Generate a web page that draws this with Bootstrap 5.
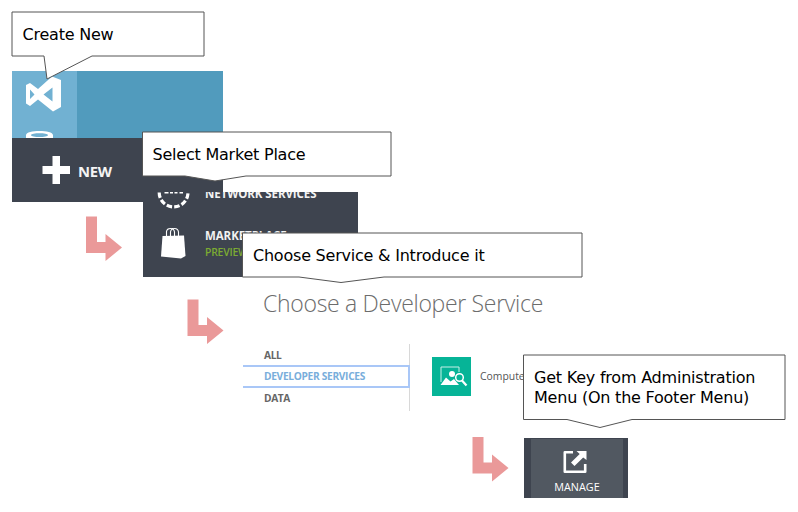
<!DOCTYPE html>
<html lang="en">
<head>
<meta charset="utf-8">
<meta name="viewport" content="width=device-width, initial-scale=1">
<title>Getting a service key</title>
<link href="https://cdn.jsdelivr.net/npm/bootstrap@5.3.0/dist/css/bootstrap.min.css" rel="stylesheet">
<style>
  body { background: #fff; color: #000; }
  .canvas { width: 798px; height: 512px; }
  .node { position: absolute; }
  .ui { font-family: "Open Sans", "Noto Sans", sans-serif; white-space: nowrap; line-height: 1; }
  .dark { background: #3e444f; color: #fff; }

  .shot-new { left: 12px; top: 71px; width: 211px; height: 130px; }
  .shot-new .upper { height: 67px; background: #519bbd; }
  .shot-new .side { width: 64.5px; background: #71b1d2; }
  .shot-new .bar { height: 63.5px; padding-left: 30px; gap: 8px; }
  .new-label { font-size: 14.8px; font-weight: 700; letter-spacing: -.3px; padding-top: 4px; color: #f4f4f4; }

  .shot-market { left: 143px; top: 192px; width: 215px; height: 85px; }
  .market-row { padding-left: 14px; gap: 14px; }
  .market-row.first { height: 18px; }
  .market-row.second { margin-top: 17px; padding-left: 17px; }
  .market-title { font-size: 11.5px; font-weight: 700; letter-spacing: -.08px; color: #f2f2f2; }
  .market-name { margin-top: 3px; }
  .net-title { margin-top: -4px; }
  .preview { font-size: 10.4px; font-weight: 600; color: #7cab32; letter-spacing: -.2px; margin-top: 5px; }

  .shot-choose { left: 243px; top: 290px; width: 310px; height: 121px; }
  .choose-title { font-size: 23px; font-weight: 300; color: #6c6c6c; line-height: 26px; padding-left: 20px; letter-spacing: -.3px; }
  .menu-list { width: 167px; height: 67px; margin-top: 28px; border-right: 1px solid #d8d8d8; font-size: 10.2px; font-weight: 700; color: #666; }
  .menu-line { padding-left: 21px; height: 21px; line-height: 22px; letter-spacing: -.4px; }
  .menu-line.chosen { height: 23px; line-height: 19px; margin-right: -1px; color: #79aedb; border: 2px solid #a9c7f7; border-left: 0; letter-spacing: -.32px; }
  .menu-line.last { line-height: 20px; }
  .tile { width: 39px; height: 38.5px; margin: 41px 0 0 22px; background: #06b497; }
  .tile-label { font-size: 10.4px; font-weight: 500; color: #555; margin: 55px 0 0 9px; }

  .shot-manage { left: 524px; top: 438px; width: 104px; height: 60px; padding: 1px 5px 0 7px; }
  .manage-btn { background: #515861; height: 59px; }
  .manage-label { font-size: 10.8px; font-weight: 500; margin-top: 6.500px; letter-spacing: 0; }

  .callout-text { font-family: "DejaVu Sans", Verdana, sans-serif; font-size: 16px; line-height: 20px; white-space: nowrap; letter-spacing: -.22px; }
  .overlay { left: 0; top: 0; }
  .t1 { left: 22.5px; top: 25px; }
  .t2 { left: 152.5px; top: 145px; }
  .t3 { left: 253px; top: 246px; }
  .t4 { left: 534px; top: 368px; }
</style>
</head>
<body>
<main class="canvas position-relative overflow-hidden">

  <section class="node shot-new ui">
    <div class="upper d-flex">
      <div class="side">
        <svg class="d-block" width="64" height="67" viewBox="0 0 64 67">
          <path fill="#fff" fill-rule="evenodd" d="M14 14 18 12 26 18 40 5.500 49 9V36L41 40.500 26 28.500 18 35 14 32.500ZM18 18.500V28L22.500 23.500ZM40.500 16.500 31.500 23.500 40.500 30.500Z"/>
          <path fill="#fff" fill-rule="evenodd" d="M14 67V64C14 58.500 41 58.500 41 64V67ZM19 64C19 66.800 36 66.800 36 64C36 61.500 19 61.500 19 64Z"/>
        </svg>
      </div>
    </div>
    <div class="bar dark d-flex align-items-center">
      <svg width="28" height="28" viewBox="0 0 28 28"><path fill="#fff" d="M10.500 0h7.500v10h10v8H18v10h-7.500V18H.500v-8h10z"/></svg>
      <span class="new-label">NEW</span>
    </div>
  </section>

  <section class="node shot-market dark ui overflow-hidden">
    <div class="market-row first d-flex">
      <svg width="34" height="18" viewBox="0 0 34 18">
        <path d="M2.200 .5A14.400 14.400 0 0 0 31 .5" fill="none" stroke="#fff" stroke-width="3.200" stroke-dasharray="5.500 2.200"/>
        <path d="M7.500 0h4v1.500h-4zM13 0h3v1.500h-3zM17.500 0h3v1.500h-3zM22.500 0h3.500v1.500h-3.500z" fill="#fff"/>
      </svg>
      <span class="market-title net-title">NETWORK SERVICES</span>
    </div>
    <div class="market-row second d-flex">
      <svg width="31" height="32" viewBox="0 0 31 32">
        <path fill="#fff" d="M2.500 9 24 8.500 25.500 29 21 31.500 1 29.500Z"/>
        <path fill="none" stroke="#fff" stroke-width="1.100" d="M6.500 10V4.500Q7 1.500 10.500 1.500T14.500 5V10M10.500 10V5Q11 1.500 14.500 1.500T18.500 5V10"/>
      </svg>
      <div>
        <div class="market-title market-name">MARKETPLACE</div>
        <div class="preview">PREVIEW</div>
      </div>
    </div>
  </section>

  <section class="node shot-choose ui">
    <div class="choose-title">Choose a Developer Service</div>
    <div class="d-flex">
      <div class="menu-list">
        <div class="menu-line">ALL</div>
        <div class="menu-line chosen">DEVELOPER SERVICES</div>
        <div class="menu-line last">DATA</div>
      </div>
      <div class="tile">
        <svg class="d-block" width="39" height="39" viewBox="0 0 39 39">
          <path fill="none" stroke="#c7efe7" d="M9 25V10H27V15"/>
          <circle cx="20" cy="17" r="3" fill="#fff"/>
          <path fill="#fff" d="M8.500 28 14 20.500 18.500 24.500 22 22 27 28Z"/>
          <circle cx="27.500" cy="20.500" r="3.800" fill="#06b497" stroke="#fff" stroke-width="1.500"/>
          <path stroke="#fff" stroke-width="2.200" d="M30 23.500 34.500 28.500"/>
        </svg>
      </div>
      <div class="tile-label">Computer</div>
    </div>
  </section>

  <section class="node shot-manage dark ui">
    <div class="manage-btn d-flex flex-column align-items-center">
      <svg class="mt-2 flex-shrink-0" width="30" height="28" viewBox="0 0 30 28">
        <path fill="none" stroke="#fff" stroke-width="2.600" stroke-linejoin="round" d="M11 5.300H2.800V24.700H23.200V17"/>
        <path fill="#fff" d="M14.500 4H24.500V13L21.200 10.500 12.500 19 9 15.500 17.700 7Z"/>
      </svg>
      <span class="manage-label">MANAGE</span>
    </div>
  </section>

  <!-- Callout outlines and step arrows -->
  <svg class="node overlay" width="798" height="512" viewBox="0 0 798 512">
    <g fill="#fff" stroke="#555" stroke-width="1">
      <path d="M12 12H204V56H92L47 79 44 56H12Z"/>
      <path d="M142.500 132H391V176H246L215 181 185 176H142.500Z"/>
      <path d="M242.500 233H582V277H384L341 282.500 299 277H242.500Z"/>
      <path d="M523.500 355H785V419.500H632L600 427.500 567 419.500H523.500Z"/>
    </g>
    <g fill="#ea9999">
      <path id="step" d="M86 216.500H97V242H105.500V234L122 247.500 105.500 261V253H86Z"/>
      <use href="#step" x="101.500" y="83"/>
      <use href="#step" x="386.500" y="220.500"/>
    </g>
  </svg>

  <div class="node callout-text t1">Create New</div>
  <div class="node callout-text t2">Select Market Place</div>
  <div class="node callout-text t3">Choose Service &amp; Introduce it</div>
  <div class="node callout-text t4">Get Key from Administration<br>Menu (On the Footer Menu)</div>
</main>
<script src="https://cdn.jsdelivr.net/npm/bootstrap@5.3.0/dist/js/bootstrap.bundle.min.js"></script>
</body>
</html>
